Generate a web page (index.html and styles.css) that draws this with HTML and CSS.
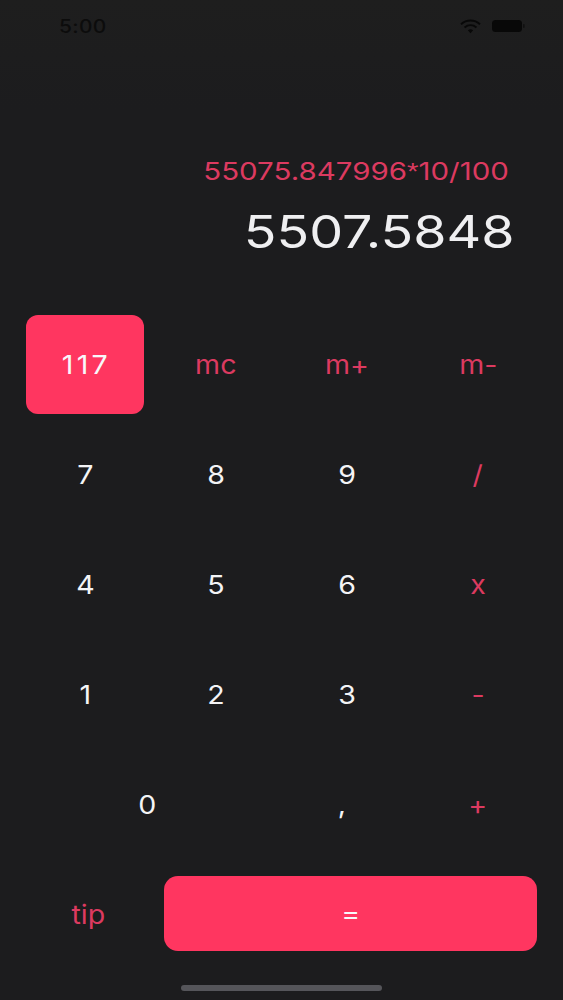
FILE: index.html
```html
<!DOCTYPE html>
<html lang="en">
<head>
<meta charset="utf-8">
<title>Calculator</title>
<link rel="stylesheet" href="styles.css">
</head>
<body>
<div class="app">
  <header class="status">
    <span class="time"><span class="wide">5:00</span></span>
    <div class="status-icons">
      <svg class="wifi" width="21" height="15" viewBox="0 0 21 15"><path d="M1 5.2C6.5.4 14.5.4 20 5.2" fill="none" stroke="#080808" stroke-width="2"/><path d="M4.5 8.4c3.6-3 8.4-3 12 0" fill="none" stroke="#080808" stroke-width="2"/><path d="M7.8 11.2c1.7-1.2 3.7-1.2 5.4 0l-2.7 3z" fill="#080808"/></svg>
      <svg class="battery" width="33" height="14" viewBox="0 0 33 14"><rect x="0" y="1" width="30" height="12" rx="3.5" fill="#080808"/><rect x="31" y="5" width="1.6" height="4" rx=".8" fill="#101010"/></svg>
    </div>
  </header>
  <section class="display">
    <div class="expression"><span class="wide">55075.847996<span class="star">*</span>10/100</span></div>
    <div class="result"><span class="wide">5507.5848</span></div>
  </section>
  <section class="keypad">
    <button class="key key-fill key-count"><span class="wide">117</span></button>
    <button class="key key-op"><span class="wide">mc</span></button>
    <button class="key key-op"><span class="wide">m+</span></button>
    <button class="key key-op"><span class="wide">m-</span></button>
    <button class="key"><span class="wide">7</span></button>
    <button class="key"><span class="wide">8</span></button>
    <button class="key"><span class="wide">9</span></button>
    <button class="key key-op"><span class="wide">/</span></button>
    <button class="key"><span class="wide">4</span></button>
    <button class="key"><span class="wide">5</span></button>
    <button class="key"><span class="wide">6</span></button>
    <button class="key key-op"><span class="wide">x</span></button>
    <button class="key"><span class="wide">1</span></button>
    <button class="key"><span class="wide">2</span></button>
    <button class="key"><span class="wide">3</span></button>
    <button class="key key-op"><span class="wide">-</span></button>
    <button class="key key-zero"><span class="wide">0</span></button>
    <button class="key key-comma"><span class="wide">,</span></button>
    <button class="key key-op"><span class="wide">+</span></button>
  </section>
  <section class="bottom">
    <button class="key key-op key-tip"><span class="wide">tip</span></button>
    <button class="key key-fill key-equals"><span class="wide">=</span></button>
  </section>
  <div class="home-wrap"><div class="home"></div></div>
</div>
</body>
</html>
```
FILE: styles.css
```css
* { box-sizing: border-box; }
html, body { margin: 0; padding: 0; background: #1c1c1e; }
.app {
  width: 563px;
  height: 1000px;
  overflow: hidden;
  display: flex;
  flex-direction: column;
  font-family: Inter, "Liberation Sans", sans-serif;
  background: linear-gradient(#1e1e1e, #1c1c1e 110px);
}
.wide { display: inline-block; transform: scaleX(1.1); }
.status {
  height: 52px;
  padding: 0 38px 0 59px;
  display: flex;
  justify-content: space-between;
  align-items: center;
}
.time { font-size: 18px; font-weight: 500; color: #0c0c0c; letter-spacing: .3px; }
.time .wide { transform: scaleX(1.16); transform-origin: left; }
.status-icons { display: flex; align-items: center; gap: 11px; }
.wifi, .battery { display: block; }
.display {
  height: 263px;
  padding: 103px 54px 0 0;
  display: flex;
  flex-direction: column;
  align-items: flex-end;
}
.expression { font-size: 24px; line-height: 34px; color: #dc3a60; white-space: nowrap; }
.expression .wide { transform: scaleX(1.228); transform-origin: right; }
.star { font-family: "Liberation Sans", sans-serif; }
.result { margin-top: 16px; margin-right: -5px; font-size: 45px; line-height: 54px; font-weight: 400; color: #efeff1; white-space: nowrap; }
.result .wide { transform: scaleX(1.195); transform-origin: right; }
.keypad {
  padding: 0 26px;
  display: grid;
  grid-template-columns: repeat(4, 118px);
  grid-auto-rows: 99px;
  gap: 11px 13px;
}
.key {
  border: 0;
  padding: 0;
  margin: 0;
  background: none;
  font-family: inherit;
  font-size: 26px;
  font-weight: 400;
  line-height: 30px;
  color: #f4f4f6;
  display: flex;
  align-items: center;
  justify-content: center;
}
.key-op { color: #dc3a60; }
.key-fill { background: #ff3660; border-radius: 12px; color: #f8f8fa; }
.key-count { letter-spacing: 3px; padding-left: 3px; }
.key-zero { grid-column: span 2; padding-right: 7px; }
.key-comma { padding-right: 10px; }
.bottom {
  margin-top: 22px;
  padding: 0 26px;
  height: 75px;
  display: flex;
  gap: 14px;
}
.key-tip { width: 124px; padding-top: 3px; }
.key-equals { flex: 1; border-radius: 14px; }
.home-wrap { padding-top: 34px; display: flex; justify-content: center; }
.home { width: 201px; height: 6px; border-radius: 3px; background: #55555a; }
```
